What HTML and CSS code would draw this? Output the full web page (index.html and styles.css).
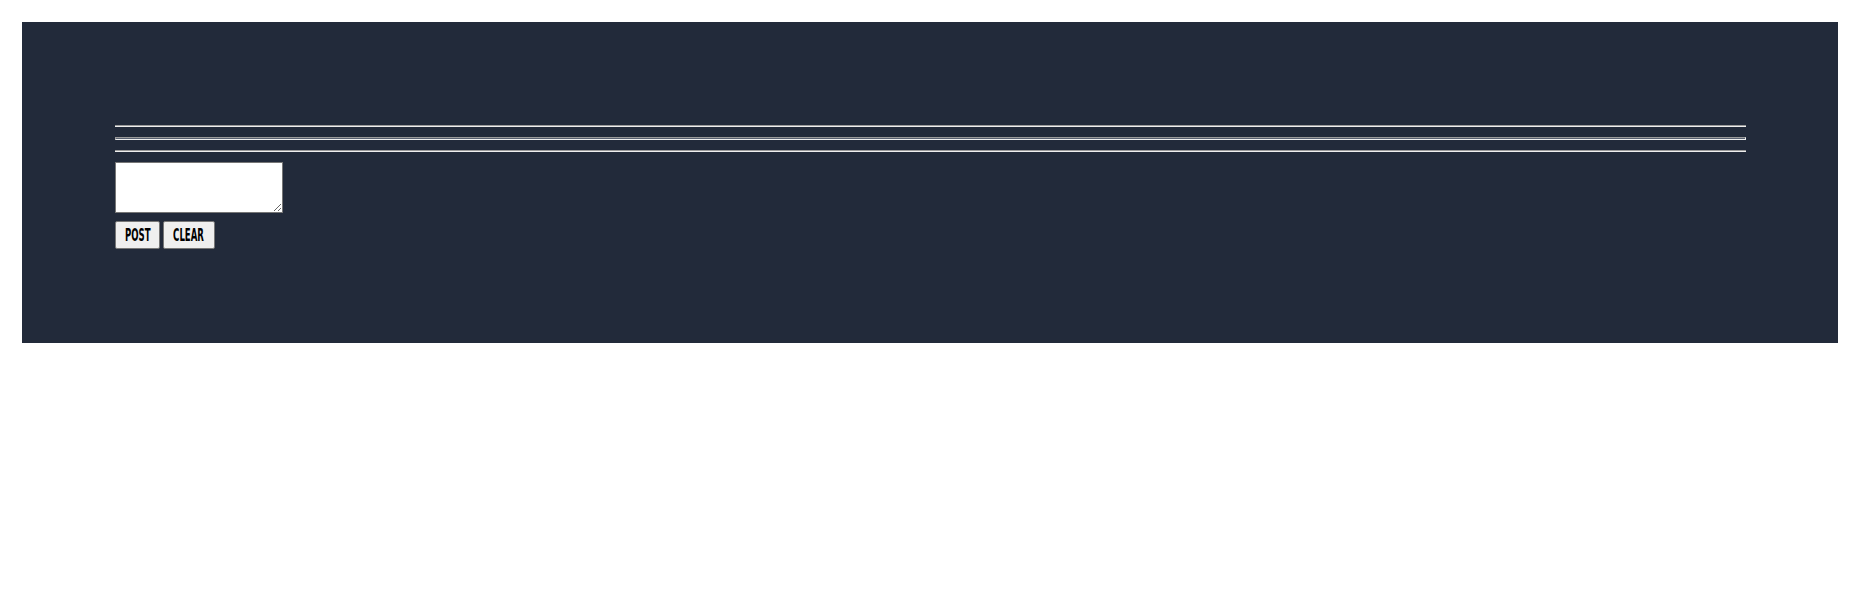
FILE: index.html
```html
<!DOCTYPE html>
<html>
<head>
<meta charset="utf-8">
<link rel="stylesheet" href="styles.css">
</head>
<body>
<div class="panel">
  <div class="rule rule-a"></div>
  <div class="rule rule-b"></div>
  <div class="rule rule-c"></div>
  <textarea class="entry"></textarea>
  <div class="actions">
    <button class="btn btn-post"><span class="label">POST</span></button>
    <button class="btn btn-clear"><span class="label">CLEAR</span></button>
  </div>
</div>
</body>
</html>
```

FILE: styles.css
```css
html, body {
  margin: 0;
  padding: 0;
  background: #ffffff;
}

.panel {
  margin: 22px 14px 0 22px;
  height: 321px;
  box-sizing: border-box;
  padding: 103px 92px 0 93px;
  background: #222a3a;
  display: flex;
  flex-direction: column;
  align-items: flex-start;
}

.rule {
  align-self: stretch;
  box-sizing: border-box;
}

.rule-a {
  height: 2px;
  border-top: 1px solid #9a9a9a;
  border-bottom: 1px solid #eeeeee;
  margin-bottom: 10px;
}

.rule-b {
  height: 3px;
  border: 1px solid #9a9a9a;
  border-bottom-color: #eeeeee;
  border-right-color: #eeeeee;
  background: #5a6272;
  margin-bottom: 10px;
}

.rule-c {
  height: 2px;
  border-top: 1px solid #9a9a9a;
  border-bottom: 1px solid #eeeeee;
  margin-bottom: 10px;
}

.entry {
  width: 168px;
  height: 51px;
  box-sizing: border-box;
  margin: 0;
  padding: 2px;
  border: 1px solid #767676;
  background: #ffffff;
  font-family: "Liberation Mono", monospace;
  font-size: 13px;
}

.actions {
  display: flex;
  gap: 3px;
  margin-top: 8px;
}

.btn {
  height: 28px;
  box-sizing: border-box;
  margin: 0;
  padding: 0;
  border: 1px solid #767676;
  border-radius: 2px;
  background: #efefef;
  color: #000000;
  display: flex;
  align-items: center;
  justify-content: center;
  font-family: "DejaVu Sans Condensed", "Liberation Sans", sans-serif;
  font-weight: bold;
  font-size: 17px;
  line-height: 1;
}

.btn-post { width: 45px; }
.btn-clear { width: 52px; }

.label {
  display: inline-block;
  transform: scaleX(0.56);
  white-space: nowrap;
}
```
